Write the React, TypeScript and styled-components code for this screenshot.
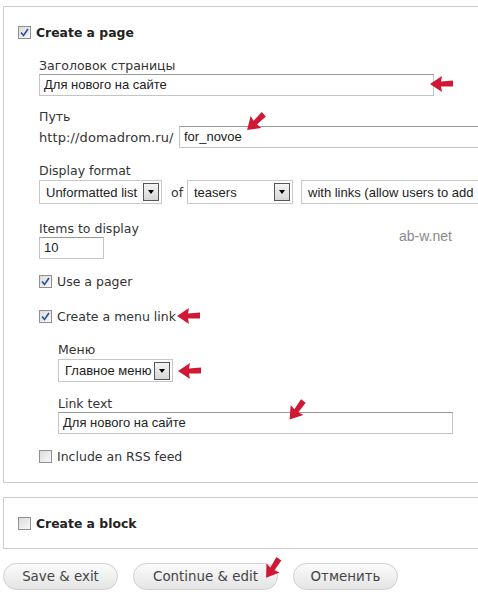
import styled, { createGlobalStyle } from "styled-components";

const GlobalStyle = createGlobalStyle`
  html, body {
    margin: 0;
    padding: 0;
    background: #fff;
    overflow: hidden;
  }
  body {
    font-family: "DejaVu Sans", Verdana, sans-serif;
    font-size: 12.5px;
    color: #333;
  }
`;

const Page = styled.div`
  width: 520px;
  padding: 6px 0 0 3px;
`;

const Fieldset = styled.div<{ $top: number; $bottom: number }>`
  position: relative;
  border: 1px solid #cdcdcd;
  padding: ${(p) => p.$top}px 0 ${(p) => p.$bottom}px 14px;
  margin-bottom: 14px;
`;

const Legend = styled.label`
  display: flex;
  align-items: center;
  gap: 5px;
  font-weight: bold;
  font-size: 12.4px;
  color: #222;
  height: 16px;
`;

const Indent = styled.div<{ $left: number }>`
  padding-left: ${(p) => p.$left}px;
`;

const Label = styled.div<{ $mt: number }>`
  margin-top: ${(p) => p.$mt}px;
  height: 17px;
  line-height: 17px;
`;

const TextInput = styled.div<{ $w: number }>`
  position: relative;
  box-sizing: border-box;
  width: ${(p) => p.$w}px;
  height: 22px;
  border: 1px solid #c4c4c4;
  border-top-color: #999;
  font-family: "Liberation Sans", Arial, sans-serif;
  font-size: 13px;
  color: #222;
  padding: 0 4px;
  line-height: 20px;
  white-space: nowrap;
`;

const PathRow = styled.div`
  display: flex;
  align-items: center;
  margin-top: 1px;
`;

const Prefix = styled.span`
  width: 140px;
  font-size: 13px;
  letter-spacing: 0.1px;
`;

const FormatRow = styled.div`
  position: relative;
  display: flex;
  align-items: center;
  margin-top: 1px;
`;

const Select = styled.div<{ $w: number; $h?: number }>`
  position: relative;
  box-sizing: border-box;
  width: ${(p) => p.$w}px;
  height: ${(p) => p.$h ?? 24}px;
  border: 1px solid #c8c8c8;
  display: flex;
  align-items: center;
  justify-content: space-between;
  padding: 0 2px 0 6px;
  font-family: "Liberation Sans", Arial, sans-serif;
  font-size: 13px;
  color: #222;
  white-space: nowrap;
  overflow: hidden;
`;

const WideSelect = styled(Select)`
  margin-left: 8px;
  border-right: none;
`;

const DropButton = styled.span`
  box-sizing: border-box;
  width: 16px;
  height: 18px;
  border: 1px solid #555;
  background: linear-gradient(#f4f4f4, #d6d6d6);
  display: flex;
  align-items: center;
  justify-content: center;
  &::after {
    content: "";
    border-left: 3.5px solid transparent;
    border-right: 3.5px solid transparent;
    border-top: 4px solid #000;
  }
`;

const Of = styled.span`
  margin: 0 3px 0 9px;
  width: 13px;
`;

const CheckRow = styled.label<{ $mt: number }>`
  display: flex;
  align-items: center;
  gap: 5px;
  height: 16px;
  margin-top: ${(p) => p.$mt}px;
  position: relative;
`;

const Box = styled.span`
  box-sizing: border-box;
  width: 13px;
  height: 13px;
  border: 1px solid #8f8f8f;
  background: linear-gradient(135deg, #dcdcdc, #f8f8f8);
  display: flex;
  align-items: center;
  justify-content: center;
`;

const Watermark = styled.div`
  position: absolute;
  left: 395px;
  top: 221px;
  font-family: "Liberation Sans", Arial, sans-serif;
  font-size: 14px;
  color: #8a8a8a;
`;

const Arrow = styled.svg<{ $x: number; $y: number; $rot: number }>`
  position: absolute;
  left: ${(p) => p.$x}px;
  top: ${(p) => p.$y}px;
  width: 24px;
  height: 18px;
  transform: rotate(${(p) => p.$rot}deg);
  overflow: visible;
`;

const Buttons = styled.div`
  position: relative;
  display: flex;
  gap: 15px;
`;

const Button = styled.button<{ $w: number }>`
  box-sizing: border-box;
  width: ${(p) => p.$w}px;
  height: 27px;
  border: 1px solid #cfcfcf;
  border-radius: 14px;
  background: linear-gradient(#fbfbfb, #e4e4e4);
  font-family: "DejaVu Sans", Verdana, sans-serif;
  font-size: 13.4px;
  color: #444;
  padding: 0;
`;

const Check = ({ on }: { on?: boolean }) => (
  <Box>
    {on && (
      <svg width="9" height="9" viewBox="0 0 9 9">
        <path d="M1 4.5 L3.5 7.5 L8 1" fill="none" stroke="#2b4f9e" strokeWidth="1.6" />
      </svg>
    )}
  </Box>
);

const RedArrow = ({ x, y, rot }: { x: number; y: number; rot: number }) => (
  <Arrow $x={x} $y={y} $rot={rot} viewBox="0 0 24 18">
    <polygon points="0,9 12,1 11,6.5 23,5.5 23,11.5 11,11.5 12,17" fill="#d01834" />
  </Arrow>
);

export default function App() {
  return (
    <Page>
      <GlobalStyle />
      <Fieldset $top={17} $bottom={18}>
        <Legend>
          <Check on />
          Create a page
        </Legend>
        <Indent $left={21}>
          <Label $mt={17}>Заголовок страницы</Label>
          <TextInput $w={395}>
            Для нового на сайте
            <RedArrow x={390} y={0} rot={0} />
          </TextInput>
          <Label $mt={12}>Путь</Label>
          <PathRow>
            <Prefix>http://domadrom.ru/</Prefix>
            <TextInput $w={320}>
              for_novoe
              <RedArrow x={64} y={-14} rot={-42} />
            </TextInput>
          </PathRow>
          <Label $mt={14}>Display format</Label>
          <FormatRow>
            <Select $w={123}>
              Unformatted list
              <DropButton />
            </Select>
            <Of>of</Of>
            <Select $w={106}>
              teasers
              <DropButton />
            </Select>
            <WideSelect $w={180}>with links (allow users to add</WideSelect>
          </FormatRow>
          <Label $mt={16}>Items to display</Label>
          <TextInput $w={65}>10</TextInput>
          <CheckRow $mt={14}>
            <Check on />
            Use a pager
          </CheckRow>
          <CheckRow $mt={19}>
            <Check on />
            Create a menu link
            <RedArrow x={138} y={-1} rot={0} />
          </CheckRow>
          <Indent $left={19}>
            <Label $mt={17}>Меню</Label>
            <FormatRow>
              <Select $w={115} $h={23}>
                Главное меню
                <DropButton />
              </Select>
              <RedArrow x={120} y={3} rot={0} />
            </FormatRow>
            <Label $mt={13}>Link text</Label>
            <TextInput $w={395}>
              Для нового на сайте
              <RedArrow x={226} y={-12} rot={-52} />
            </TextInput>
          </Indent>
          <CheckRow $mt={14}>
            <Check />
            Include an RSS feed
          </CheckRow>
        </Indent>
        <Watermark>ab-w.net</Watermark>
      </Fieldset>
      <Fieldset $top={17} $bottom={17}>
        <Legend>
          <Check />
          Create a block
        </Legend>
      </Fieldset>
      <Buttons>
        <Button $w={115}>Save &amp; exit</Button>
        <Button $w={145}>Continue &amp; edit</Button>
        <Button $w={105}>Отменить</Button>
        <RedArrow x={258} y={-4} rot={-55} />
      </Buttons>
    </Page>
  );
}
